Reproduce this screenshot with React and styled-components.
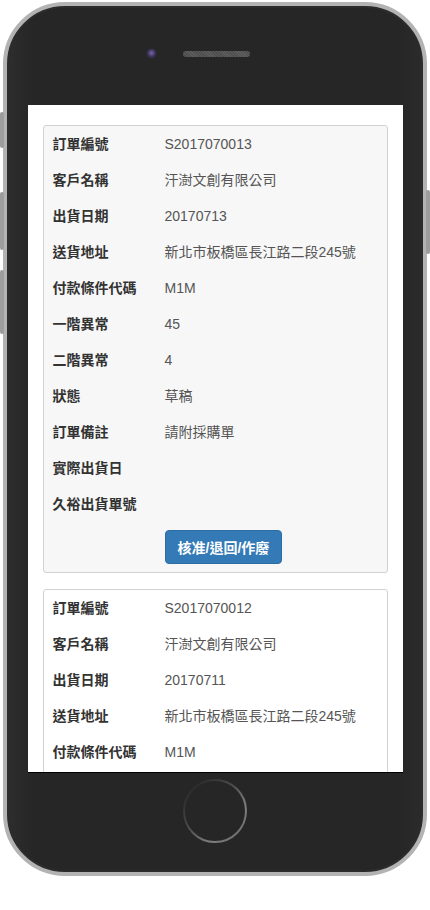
import React from 'react';
import styled, { createGlobalStyle } from 'styled-components';

const Global = createGlobalStyle`
    html, body {
        margin: 0;
        padding: 0;
        background: #ffffff;
    }
    body {
        font-family: "Liberation Sans", "Noto Sans CJK TC", sans-serif;
    }
`

const Stage = styled.div`
    width: 430px;
    height: 910px;
    padding: 2px 0 0 3px;
    box-sizing: border-box;
`

const Phone = styled.div`
    position: relative;
    width: 424px;
    height: 874px;
    box-sizing: border-box;
    border: 4px solid #b3b3b3;
    border-radius: 62px;
    background: linear-gradient(to right, #2e2e2e 0%, #262626 6%, #262626 94%, #2b2b2b 100%);
    box-shadow: inset 0 0 0 2px #2c2c2c;
    display: flex;
    flex-direction: column;
    align-items: center;
`

const SideKey = styled.div`
    position: absolute;
    width: 4px;
    background: #9d9d9d;
    border-radius: 2px;
    top: ${p => p.top}px;
    height: ${p => p.h}px;
    ${p => p.right ? 'right: -7px;' : 'left: -7px;'}
`

const TopBar = styled.div`
    height: 99px;
    width: 100%;
    display: flex;
    justify-content: center;
    align-items: flex-start;
    padding-top: 43px;
    box-sizing: border-box;
    gap: 27px;
`

const Camera = styled.div`
    width: 9px;
    height: 9px;
    margin-top: 0;
    border-radius: 50%;
    background: radial-gradient(circle at 50% 45%, #7a68a0 0%, #463a66 45%, #201c2a 100%);
    box-shadow: 0 0 2px #3a3450;
    margin-left: -34px;
`

const Speaker = styled.div`
    width: 67px;
    height: 6px;
    margin-top: 2px;
    border-radius: 3px;
    background: repeating-linear-gradient(45deg, #4d4d4d 0 1px, #5e5e5e 1px 2px);
`

const Screen = styled.div`
    width: 375px;
    height: 668px;
    background: #ffffff;
    overflow: hidden;
    border-bottom: 1px solid #000;
    box-sizing: border-box;
    padding: 20px 15px 0;
    display: flex;
    flex-direction: column;
    gap: 16px;
`

const BottomBar = styled.div`
    flex: 1;
    width: 100%;
    display: flex;
    justify-content: center;
    padding-top: 3px;
    box-sizing: border-box;
`

const Card = styled.div`
    flex-shrink: 0;
    border: 1px solid #d2d2d2;
    border-radius: 3px;
    background: ${p => p.shaded ? '#f7f7f7' : '#ffffff'};
    padding: 0 9px 8px;
`

const Row = styled.div`
    display: flex;
    align-items: center;
    height: 36px;
    font-size: 14px;
    line-height: 20px;
`

const Label = styled.div`
    width: 112px;
    font-weight: bold;
    color: #333333;
`

const Value = styled.div`
    color: #555555;
`

const Actions = styled.div`
    display: flex;
    padding: 8px 0 0 112px;
`

const Button = styled.button`
    font-family: inherit;
    font-size: 14px;
    font-weight: bold;
    color: #ffffff;
    background: #337ab7;
    border: 1px solid #2e6da4;
    border-radius: 4px;
    height: 34px;
    padding: 0 12px;
    cursor: pointer;
`

const fields = [
    ['訂單編號', 'orderNo'],
    ['客戶名稱', 'customer'],
    ['出貨日期', 'shipDate'],
    ['送貨地址', 'address'],
    ['付款條件代碼', 'payTerm'],
    ['一階異常', 'err1'],
    ['二階異常', 'err2'],
    ['狀態', 'status'],
    ['訂單備註', 'note'],
    ['實際出貨日', 'actualDate'],
    ['久裕出貨單號', 'shipNo'],
]

const orders = [
    {
        orderNo: 'S2017070013', customer: '汗澍文創有限公司', shipDate: '20170713',
        address: '新北市板橋區長江路二段245號', payTerm: 'M1M', err1: '45', err2: '4',
        status: '草稿', note: '請附採購單', actualDate: '', shipNo: '',
    },
    {
        orderNo: 'S2017070012', customer: '汗澍文創有限公司', shipDate: '20170711',
        address: '新北市板橋區長江路二段245號', payTerm: 'M1M', err1: '45', err2: '4',
        status: '草稿', note: '', actualDate: '', shipNo: '',
    },
]

function HomeButton() {
    return (
        <svg width="70" height="70" viewBox="0 0 70 70">
            <defs>
                <linearGradient id="ring" x1="0" y1="0.15" x2="0.85" y2="1">
                    <stop offset="0" stopColor="#262626" />
                    <stop offset="0.4" stopColor="#4a4a4a" />
                    <stop offset="0.75" stopColor="#808080" />
                    <stop offset="1" stopColor="#6a6a6a" />
                </linearGradient>
            </defs>
            <circle cx="35" cy="35" r="31" fill="none" stroke="url(#ring)" strokeWidth="2" />
        </svg>
    )
}

function OrderCard({ order, shaded }) {
    return (
        <Card shaded={shaded}>
            {fields.map(([label, key]) => (
                <Row key={key}>
                    <Label>{label}</Label>
                    <Value>{order[key]}</Value>
                </Row>
            ))}
            <Actions>
                <Button>核准/退回/作廢</Button>
            </Actions>
        </Card>
    )
}

function App() {
    return (
        <Stage>
            <Global />
            <Phone>
                <SideKey top={106} h={36} />
                <SideKey top={186} h={58} />
                <SideKey top={264} h={64} />
                <SideKey right top={184} h={64} />
                <TopBar>
                    <Camera />
                    <Speaker />
                </TopBar>
                <Screen>
                    {orders.map((o, i) => (
                        <OrderCard key={o.orderNo} order={o} shaded={i === 0} />
                    ))}
                </Screen>
                <BottomBar>
                    <HomeButton />
                </BottomBar>
            </Phone>
        </Stage>
    )
}

export default App;
